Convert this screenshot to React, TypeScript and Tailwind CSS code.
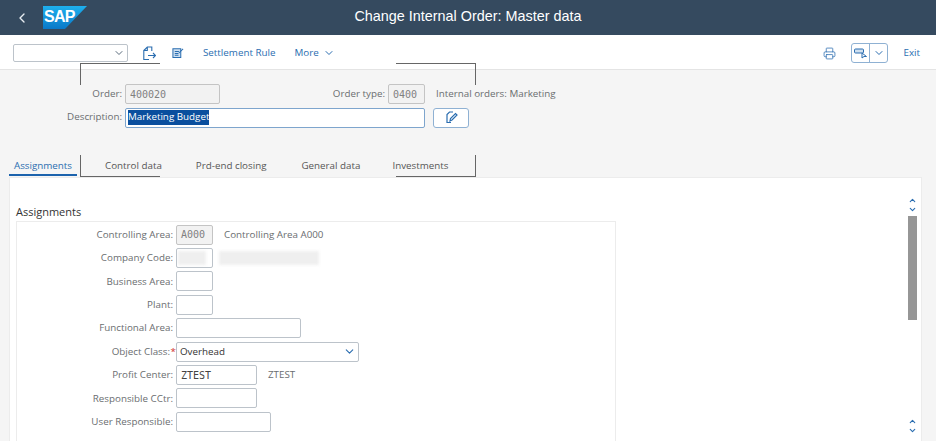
import { ChevronDown, ChevronLeft, ChevronUp, Printer } from "lucide-react";

const font = "font-['Open_Sans','Noto_Sans',sans-serif]";

function SapLogo() {
  return (
    <svg width="44" height="23" viewBox="0 0 44 23">
      <defs>
        <linearGradient id="sapg" x1="0" y1="0" x2="0" y2="1">
          <stop offset="0" stopColor="#1eb0ee" />
          <stop offset="1" stopColor="#0a78c8" />
        </linearGradient>
      </defs>
      <path d="M0 0H44L22 23H0Z" fill="url(#sapg)" />
      <text x="1" y="16" fill="#fff" fontFamily="Liberation Sans" fontWeight="700" fontSize="16" letterSpacing="-0.7">SAP</text>
    </svg>
  );
}

function Field({ w, mono, readOnly, children }: { w: string; mono?: boolean; readOnly?: boolean; children?: React.ReactNode }) {
  return (
    <div
      className={`${w} h-[20px] shrink-0 rounded-[2px] border flex items-center px-[4px] overflow-hidden ${
        readOnly ? "bg-[#f2f2f2] border-[#c4c4c4] text-[#808080]" : "bg-white border-[#bcc3ca] text-[#444]"
      } ${mono ? "font-['DejaVu_Sans_Mono',monospace] text-[10px]" : "text-[10px]"}`}
    >
      {children}
    </div>
  );
}

function Row({ label, required, children }: { label: string; required?: boolean; children: React.ReactNode }) {
  return (
    <div className="flex items-center h-[23.4px]">
      <div className={`w-[159px] shrink-0 text-right text-[9.8px] pt-[1px] text-[#6a6d70] relative ${required ? "pr-[6px]" : "pr-[3px]"}`}>
        {label}
        {required && <span className="absolute right-[0px] top-[1px] text-[#d0312d]">*</span>}
      </div>
      <div className="flex items-center">{children}</div>
    </div>
  );
}

// grey corner brackets drawn over the screen
function Bracket({ className }: { className: string }) {
  return <div className={`absolute border-[#666] ${className}`} />;
}

export default function App() {
  return (
    <div className={`w-[936px] h-[441px] overflow-hidden relative bg-[#f5f5f5] ${font}`}>
      <header className="h-[35px] bg-[#354a5f] flex items-center relative">
        <ChevronLeft className="ml-[14px] w-[16px] h-[16px] text-[#e8edf2]" strokeWidth={2} />
        <div className="ml-[13px] mt-[-1px]">
          <SapLogo />
        </div>
        <div className="absolute inset-0 flex items-center justify-center pb-[1px] text-[14.4px] text-white font-['Liberation_Sans',sans-serif]">
          Change Internal Order: Master data
        </div>
      </header>

      <div className="h-[35px] bg-white border-b border-[#e4e4e4] flex items-center pt-[2px] pl-[13px] pr-[16px] text-[9.8px] text-[#2a6db0]">
        <div className="w-[115px] h-[18px] rounded-[2px] border border-[#bcc3ca] flex items-center justify-end pr-[2px]">
          <ChevronDown className="w-[12px] h-[12px] text-[#5a6b7c]" />
        </div>
        <svg className="ml-[15px]" width="13" height="15" viewBox="0 0 13 15" fill="none" stroke="#2a6db0" strokeWidth="1.1">
          <path d="M6 13.5H0.8V4.5L4.3 1H8.8V5M4.3 1V4.5H0.8" />
          <path d="M5 9.5H12.5M10 7L12.5 9.5L10 12" />
        </svg>
        <svg className="ml-[16px]" width="12" height="12" viewBox="0 0 13 13" fill="none" stroke="#2a6db0" strokeWidth="1.1">
          <path d="M1 2H9.5V11.5H1Z" fill="#cfe0f0" />
          <path d="M3 5H7.5M3 7H7M3 9H7M7.5 6.5L12 2" />
        </svg>
        <span className="ml-[19px]">Settlement Rule</span>
        <span className="ml-[19px] flex items-center gap-[4px]">
          More <ChevronDown className="w-[12px] h-[12px]" />
        </span>
        <Printer className="ml-auto w-[13px] h-[13px]" strokeWidth={1.4} />
        <div className="ml-[15px] w-[37px] h-[20px] rounded-[3px] border border-[#8fb1d3] flex items-center">
          <div className="w-[18px] h-full border-r border-[#8fb1d3] flex items-center justify-center">
            <svg width="13" height="11" viewBox="0 0 13 11" fill="none" stroke="#2a6db0">
              <rect x="0.5" y="1" width="9" height="4" rx="1" fill="#cfe0f0" />
              <path d="M8 5L8 10L10 8.5L12.5 8.5Z" />
            </svg>
          </div>
          <ChevronDown className="mx-auto w-[12px] h-[12px]" />
        </div>
        <span className="ml-[15px]">Exit</span>
      </div>

      <section className="h-[85px] text-[9.8px] text-[#6a6d70] relative pt-[12px]">
        <div className="flex items-center h-[24px]">
          <div className="w-[125px] text-right pr-[3px] pt-[1px]">Order:</div>
          <Field w="w-[95px]" mono readOnly>400020</Field>
          <div className="w-[168px] text-right pr-[3px] pt-[1px]">Order type:</div>
          <Field w="w-[37px]" mono readOnly>0400</Field>
          <span className="ml-[11px] pt-[1px]">Internal orders: Marketing</span>
        </div>
        <div className="flex items-center h-[23px]">
          <div className="w-[125px] text-right pr-[3px]">Description:</div>
          <div className="w-[300px] h-[20px] bg-white border border-[#7ea5cd] rounded-[2px] flex items-center px-[2px] text-[9.8px]">
            <span className="bg-[#0a4f9e] text-white">Marketing Budget</span>
          </div>
          <div className="ml-[8px] w-[36px] h-[20px] bg-white border border-[#8fb1d3] rounded-[3px] flex items-center justify-center">
            <svg width="13" height="13" viewBox="0 0 13 13" fill="none" stroke="#2a6db0" strokeWidth="1.2">
              <path d="M6 11.5H2V3.5L4.5 1H8" />
              <path d="M5 10L5.5 7.5L10.5 2.5L12 4L7 9Z" />
            </svg>
          </div>
        </div>
      </section>

      <nav className="h-[22px] flex items-start pl-[9px] text-[9.8px] text-[#555]">
        <span className="w-[68px] h-[21px] text-center pt-[4px] text-[#2a6db0] border-b-2 border-[#1c63ad]">Assignments</span>
        <span className="ml-[28px] pt-[4px]">Control data</span>
        <span className="ml-[34px] pt-[4px]">Prd-end closing</span>
        <span className="ml-[35px] pt-[4px]">General data</span>
        <span className="ml-[32px] pt-[4px]">Investments</span>
      </nav>

      <main className="absolute left-[9px] right-[14px] top-[177px] bottom-0 bg-white border-t border-l border-r border-[#ececec] pl-[6px] pt-[24px]">
        <div className="text-[11px] leading-[19px] text-[#333]">Assignments</div>
        <div className="w-[600px] border border-[#ececec] border-b-0 h-[300px] pt-[1px]">
          <Row label="Controlling Area:">
            <Field w="w-[37px]" mono readOnly>A000</Field>
            <span className="ml-[11px] pt-[1px] text-[9.8px] text-[#6a6d70]">Controlling Area A000</span>
          </Row>
          <Row label="Company Code:">
            <Field w="w-[37px]">
              <div className="ml-[-3px] w-[28px] h-[14px] shrink-0 bg-[#efefef] blur-[1.5px]" />
            </Field>
            <div className="ml-[6px] w-[100px] h-[14px] bg-[#efefef] blur-[1.5px]" />
          </Row>
          <Row label="Business Area:">
            <Field w="w-[37px]" />
          </Row>
          <Row label="Plant:">
            <Field w="w-[37px]" />
          </Row>
          <Row label="Functional Area:">
            <Field w="w-[125px]" />
          </Row>
          <Row label="Object Class:" required>
            <div className="w-[183px] h-[20px] bg-white border border-[#bcc3ca] rounded-[2px] flex items-center justify-between pl-[3px] pr-[2px] text-[9.8px] text-[#333]">
              <span className="pt-[1px]">Overhead</span>
              <ChevronDown className="w-[13px] h-[13px] text-[#2a6db0]" />
            </div>
          </Row>
          <Row label="Profit Center:">
            <Field w="w-[81px]" mono>ZTEST</Field>
            <span className="ml-[11px] pt-[1px] text-[9.8px] text-[#6a6d70]">ZTEST</span>
          </Row>
          <Row label="Responsible CCtr:">
            <Field w="w-[81px]" />
          </Row>
          <Row label="User Responsible:">
            <Field w="w-[95px]" />
          </Row>
        </div>
        <div className="absolute right-[4px] top-[18px] w-[9px] flex flex-col items-center text-[#2a6db0]">
          <ChevronUp className="w-[9px] h-[9px]" strokeWidth={3} />
          <ChevronDown className="w-[9px] h-[9px]" strokeWidth={3} />
          <div className="w-[9px] h-[104px] mt-[2px] bg-[#969696]" />
          <div className="h-[97px]" />
          <ChevronUp className="w-[9px] h-[9px]" strokeWidth={3} />
          <ChevronDown className="w-[9px] h-[9px]" strokeWidth={3} />
        </div>
      </main>

      <Bracket className="left-[80px] top-[63px] w-[80px] h-[22px] border-l border-t" />
      <Bracket className="left-[396px] top-[63px] w-[80px] h-[22px] border-r border-t" />
      <Bracket className="left-[80px] top-[155px] w-[80px] h-[22px] border-l border-b" />
      <Bracket className="left-[396px] top-[155px] w-[80px] h-[22px] border-r border-b" />
    </div>
  );
}
